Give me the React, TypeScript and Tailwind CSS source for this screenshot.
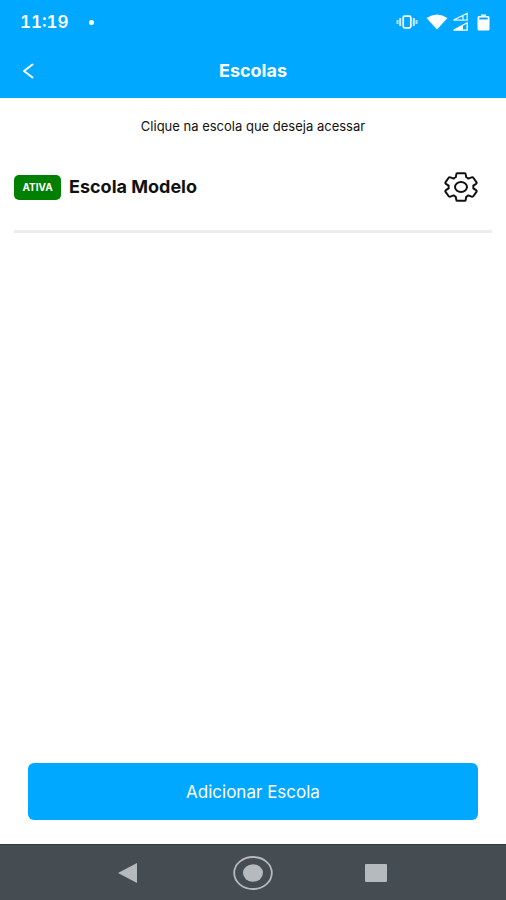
import { useState } from 'react'

type School = {
  id: string
  name: string
  active: boolean
}

const schools: School[] = [{ id: '1', name: 'Escola Modelo', active: true }]

function GearIcon() {
  return (
    <svg
      viewBox="-17 -15 34 30"
      className="w-[34px] h-[30px]"
      fill="none"
      stroke="currentColor"
      strokeWidth="2"
      strokeLinejoin="round"
      aria-hidden="true"
    >
      <path d="M-3.6 -13.8H3.6Q4.6 -13.8 4.7 -12.8L5.2 -9.8Q6.4 -9.2 7.4 -8.4L10.6 -9.6Q11.8 -10 12.5 -9L15.4 -4.9Q16 -4 15.1 -3.2L12.3 -1.3Q12.5 0 12.3 1.3L15.1 3.2Q16 4 15.4 4.9L12.5 9Q11.8 10 10.6 9.6L7.4 8.4Q6.4 9.2 5.2 9.8L4.7 12.8Q4.6 13.8 3.6 13.8H-3.6Q-4.6 13.8 -4.7 12.8L-5.2 9.8Q-6.4 9.2 -7.4 8.4L-10.6 9.6Q-11.8 10 -12.5 9L-15.4 4.9Q-16 4 -15.1 3.2L-12.3 1.3Q-12.5 0 -12.3 -1.3L-15.1 -3.2Q-16 -4 -15.4 -4.9L-12.5 -9Q-11.8 -10 -10.6 -9.6L-7.4 -8.4Q-6.4 -9.2 -5.2 -9.8L-4.7 -12.8Q-4.6 -13.8 -3.6 -13.8Z" />
      <ellipse rx="6" ry="5" />
    </svg>
  )
}

function StatusBar() {
  return (
    <div className="h-11 pl-5 pr-4 flex items-center text-white">
      <span className="text-[17px] leading-5 font-semibold tabular-nums">11:19</span>
      <span className="ml-5 w-[5px] h-[5px] rounded-full bg-white" />
      <div className="ml-auto flex items-center">
        {/* Vibrate */}
        <svg viewBox="0 0 22 14" className="w-[22px] h-[14px]" fill="none" stroke="currentColor" aria-hidden="true">
          <rect x="7.2" y="1.2" width="7.6" height="11.6" rx="1.5" strokeWidth="1.7" />
          <path d="M4.2 3V11M17.8 3V11" strokeWidth="2" opacity=".8" />
          <path d="M1.5 5V9M20.5 5V9" strokeWidth="2" opacity=".7" />
        </svg>
        {/* Wifi */}
        <svg viewBox="0 0 22 16" className="ml-2 w-[22px] h-[16px]" fill="currentColor" aria-hidden="true">
          <path d="M11 15.5L.5 4Q11 -3 21.5 4Z" />
        </svg>
        {/* Signal of both SIM cards */}
        <svg viewBox="0 0 17 20" className="ml-1 w-[17px] h-[20px]" aria-hidden="true">
          <path d="M1.5 8.2L15.2 1.2V8.2Z M11 3.5V8" fill="none" stroke="currentColor" strokeWidth="1.3" opacity=".85" />
          <path d="M1.5 18.2L15.2 10.8V18.2Z" fill="none" stroke="currentColor" strokeWidth="1.3" />
          <path d="M2 18L11 13.2V18Z" fill="currentColor" />
        </svg>
        {/* Battery */}
        <svg viewBox="0 0 13 17" className="ml-2 w-[13px] h-[17px]" fill="currentColor" aria-hidden="true">
          <path
            fillRule="evenodd"
            d="M4 .5H9V2H11Q12.5 2 12.5 3.5V15Q12.5 16.5 11 16.5H2Q.5 16.5 .5 15V3.5Q.5 2 2 2H4Z M2.3 3.6V5.5H10.7V3.6Z"
          />
        </svg>
      </div>
    </div>
  )
}

function NavigationBar() {
  return (
    <nav className="h-14 bg-[#454d52] border-t border-[#30383c] grid grid-cols-[1fr_auto_1fr] items-center text-[#b5babe]">
      <button type="button" aria-label="Voltar" className="justify-self-end mr-24">
        <svg viewBox="0 0 20 20" className="w-5 h-5" fill="currentColor" aria-hidden="true">
          <path d="M1 10L20 0V20Z" />
        </svg>
      </button>
      <button type="button" aria-label="Início">
        <svg viewBox="0 0 40 34" className="w-[40px] h-[34px]" aria-hidden="true">
          <ellipse cx="20" cy="17" rx="18.8" ry="16" fill="none" stroke="currentColor" strokeWidth="1.8" />
          <ellipse cx="20" cy="17" rx="10" ry="8.7" fill="currentColor" />
        </svg>
      </button>
      <button type="button" aria-label="Recentes" className="justify-self-start ml-[92px]">
        <svg viewBox="0 0 22 18" className="w-[22px] h-[18px]" fill="currentColor" aria-hidden="true">
          <rect width="22" height="18" rx="1" />
        </svg>
      </button>
    </nav>
  )
}

export default function App() {
  const [selected, setSelected] = useState<string | null>(null)

  return (
    <div className="min-h-screen flex flex-col bg-white font-['Inter',sans-serif] text-[#111111]">
      <div className="bg-[#00a9ff]">
        <StatusBar />
        <header className="h-[54px] px-5 grid grid-cols-[1fr_auto_1fr] items-center text-white">
          <button type="button" aria-label="Voltar" className="justify-self-start">
            <svg
              viewBox="0 0 16 18"
              className="w-[16px] h-[18px]"
              fill="none"
              stroke="currentColor"
              strokeWidth="2"
              strokeLinecap="round"
              strokeLinejoin="round"
              aria-hidden="true"
            >
              <path d="M12.5 2.5L4 9L12.5 15.5" />
            </svg>
          </button>
          <h1 className="text-lg leading-6 font-bold">Escolas</h1>
        </header>
      </div>

      <main className="flex-1 flex flex-col">
        <p className="pt-[18px] text-center text-[13px] leading-5">Clique na escola que deseja acessar</p>

        <ul className="px-[14px] pt-2">
          {schools.map((s) => (
            <li key={s.id} className="h-[89px] flex items-center border-b-3 border-[#ececec] pr-[14px]">
              <button
                type="button"
                aria-pressed={selected === s.id}
                onClick={() => setSelected(s.id)}
                className="flex-1 flex items-center gap-2 text-left"
              >
                {s.active && (
                  <span className="w-[47px] h-[25px] flex items-center justify-center rounded-[5px] bg-[#008000] text-white text-[10px] leading-4 font-bold">
                    ATIVA
                  </span>
                )}
                <span className="text-lg leading-6 font-bold">{s.name}</span>
              </button>
              <button type="button" aria-label={`Configurações de ${s.name}`}>
                <GearIcon />
              </button>
            </li>
          ))}
        </ul>

        <div className="mt-auto px-7 pb-6">
          <button
            type="button"
            className="w-full h-[57px] rounded-md bg-[#00a9ff] text-white text-[17px] leading-6"
          >
            Adicionar Escola
          </button>
        </div>
      </main>

      <NavigationBar />
    </div>
  )
}
